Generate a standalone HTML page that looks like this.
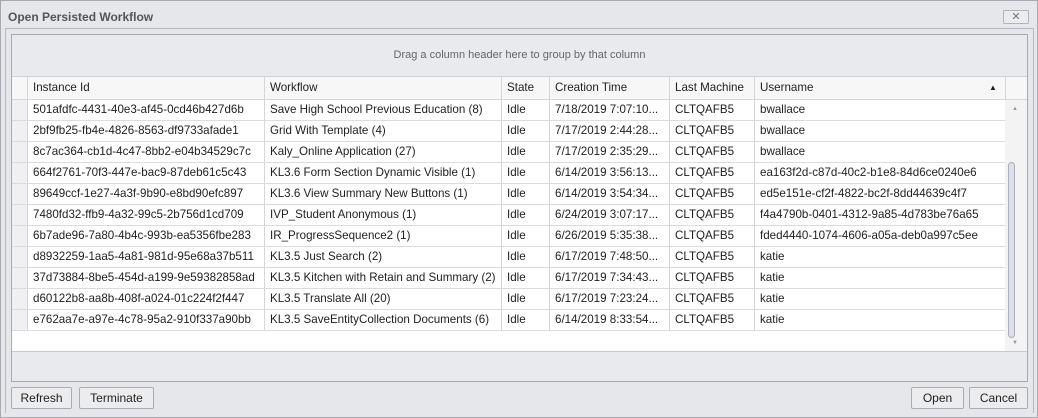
<!DOCTYPE html>
<html><head><meta charset="utf-8"><style>
*{box-sizing:border-box;margin:0;padding:0}
body{width:1038px;height:418px;background:#e6e7eb;font-family:"Liberation Sans",sans-serif;font-size:11.6px;color:#1e1e1e;position:relative;overflow:hidden}
.outer{position:absolute;left:0;top:0;width:1038px;height:418px;border:1px solid #a9a9b1}
.title{position:absolute;left:8px;top:10px;font-weight:bold;color:#555;font-size:12px}
.close{position:absolute;left:1003px;top:10px;width:26px;height:14px;border:1px solid #b4b4b8;background:#ececee;border-radius:2px;text-align:center;line-height:12px;font-size:11px;color:#777}
.panel{position:absolute;left:5px;top:28px;width:1029px;height:385px;border:1px solid #b8b8bf;border-bottom:none}
.grid{position:absolute;left:11px;top:34px;width:1017px;height:348px;border:1px solid #a8a8b0;background:#e9eaee}
.group{position:absolute;left:0;top:0;width:1015px;height:42px;text-align:center;line-height:40px;color:#666;font-size:11px;border-bottom:1px solid #d0d0d6}
.hdr{position:absolute;left:0;top:42px;height:23px;width:1015px;background:#f7f7f8;border-bottom:1px solid #d5d5da}
.cell{position:absolute;top:0;height:100%;padding-left:5px;line-height:21px;white-space:nowrap;overflow:hidden;border-right:1px solid #d5d5da}
.rows{position:absolute;left:0;top:65px;width:993px;height:251px;background:#fff}
.row{position:absolute;left:0;width:993px;height:21px;border-bottom:1px solid #dcdce0}
.sel{background:#f0f0f2}
.sb{position:absolute;left:993px;top:65px;width:22px;height:251px;background:#f3f3f3}
.thumb{position:absolute;left:3px;top:62px;width:7px;height:176px;border:1px solid #a8acc0;background:#dde0ec;border-radius:4px}
.foot{position:absolute;left:0;top:316px;width:1015px;height:30px;background:#e9eaee;border-top:1px solid #c8c8ce}
.btn{position:absolute;top:387px;height:22px;border:1px solid #acacb0;background:#ececee;border-radius:2px;text-align:center;line-height:20px;font-size:12px;color:#222}
</style></head><body>
<div class="outer"></div>
<div class="title">Open Persisted Workflow</div>
<div class="close">✕</div>
<div class="panel"></div>
<div class="grid">
<div class="group">Drag a column header here to group by that column</div>
<div class="hdr">
<div class="cell" style="left:0;width:16px"></div>
<div class="cell" style="left:16px;width:237px;line-height:22px">Instance Id</div>
<div class="cell" style="left:253px;width:237px;line-height:22px">Workflow</div>
<div class="cell" style="left:490px;width:48px;line-height:22px">State</div>
<div class="cell" style="left:538px;width:120px;line-height:22px">Creation Time</div>
<div class="cell" style="left:658px;width:85px;line-height:22px">Last Machine</div>
<div class="cell" style="left:743px;width:251px;line-height:22px">Username<span style="position:absolute;left:234px;top:0;font-size:8px">▲</span></div>
</div>
<div class="rows" id="rows"></div>
<div class="sb"><div style="position:absolute;left:7px;top:6px;font-size:6px;color:#999">▲</div><div class="thumb"></div><div style="position:absolute;left:7px;top:240px;font-size:6px;color:#999">▼</div></div>
<div class="foot"></div>
</div>
<div class="btn" style="left:11px;width:61px">Refresh</div>
<div class="btn" style="left:79px;width:75px">Terminate</div>
<div class="btn" style="left:911px;width:53px">Open</div>
<div class="btn" style="left:969px;width:59px">Cancel</div>
<script>
var d=[["501afdfc-4431-40e3-af45-0cd46b427d6b","Save High School Previous Education (8)","7/18/2019 7:07:10...","bwallace"],
["2bf9fb25-fb4e-4826-8563-df9733afade1","Grid With Template (4)","7/17/2019 2:44:28...","bwallace"],
["8c7ac364-cb1d-4c47-8bb2-e04b34529c7c","Kaly_Online Application (27)","7/17/2019 2:35:29...","bwallace"],
["664f2761-70f3-447e-bac9-87deb61c5c43","KL3.6 Form Section Dynamic Visible (1)","6/14/2019 3:56:13...","ea163f2d-c87d-40c2-b1e8-84d6ce0240e6"],
["89649ccf-1e27-4a3f-9b90-e8bd90efc897","KL3.6 View Summary New Buttons (1)","6/14/2019 3:54:34...","ed5e151e-cf2f-4822-bc2f-8dd44639c4f7"],
["7480fd32-ffb9-4a32-99c5-2b756d1cd709","IVP_Student Anonymous (1)","6/24/2019 3:07:17...","f4a4790b-0401-4312-9a85-4d783be76a65"],
["6b7ade96-7a80-4b4c-993b-ea5356fbe283","IR_ProgressSequence2 (1)","6/26/2019 5:35:38...","fded4440-1074-4606-a05a-deb0a997c5ee"],
["d8932259-1aa5-4a81-981d-95e68a37b511","KL3.5 Just Search (2)","6/17/2019 7:48:50...","katie"],
["37d73884-8be5-454d-a199-9e59382858ad","KL3.5 Kitchen with Retain and Summary (2)","6/17/2019 7:34:43...","katie"],
["d60122b8-aa8b-408f-a024-01c224f2f447","KL3.5 Translate All (20)","6/17/2019 7:23:24...","katie"],
["e762aa7e-a97e-4c78-95a2-910f337a90bb","KL3.5 SaveEntityCollection Documents (6)","6/14/2019 8:33:54...","katie"]];
var h="";d.forEach(function(r,i){h+='<div class="row" style="top:'+(i*21)+'px">'+
'<div class="cell sel" style="left:0;width:16px"></div>'+
'<div class="cell" style="left:16px;width:237px;line-height:20px">'+r[0]+'</div>'+
'<div class="cell" style="left:253px;width:237px;line-height:20px">'+r[1]+'</div>'+
'<div class="cell" style="left:490px;width:48px;line-height:20px">Idle</div>'+
'<div class="cell" style="left:538px;width:120px;line-height:20px">'+r[2]+'</div>'+
'<div class="cell" style="left:658px;width:85px;line-height:20px">CLTQAFB5</div>'+
'<div class="cell" style="left:743px;width:251px;line-height:20px">'+r[3]+'</div></div>';});
document.getElementById("rows").innerHTML=h;
</script>
</body></html>
